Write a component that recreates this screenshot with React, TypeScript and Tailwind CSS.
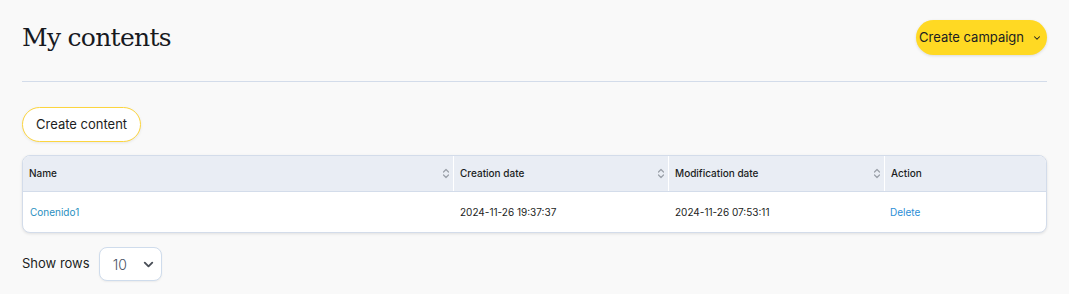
import { ChevronDown } from 'lucide-react';

const columns = [
  { label: 'Name', width: 'w-[430px]', sortable: true },
  { label: 'Creation date', width: 'w-[215px]', sortable: true },
  { label: 'Modification date', width: 'w-[216px]', sortable: true },
  { label: 'Action', width: 'flex-1', sortable: false },
];

const rows = [
  {
    name: 'Conenido1',
    created: '2024-11-26 19:37:37',
    modified: '2024-11-26 07:53:11',
  },
];

function SortIcon() {
  return (
    <svg width="8" height="11" viewBox="0 0 8 11" fill="none" className="text-[#9aa0a8]">
      <path d="M1.5 4 L4 1.5 L6.5 4" stroke="currentColor" strokeWidth="1.2" strokeLinecap="round" strokeLinejoin="round" />
      <path d="M1.5 7 L4 9.5 L6.5 7" stroke="currentColor" strokeWidth="1.2" strokeLinecap="round" strokeLinejoin="round" />
    </svg>
  );
}

export default function App() {
  return (
    <main className="min-h-[294px] bg-[#f9f9f9] px-[22px] pt-[20px] font-['Inter',sans-serif] text-[#1b1d22]">
      <header className="flex h-[35px] items-center justify-between">
        <h1 className="font-['DejaVu_Serif',serif] text-[25px] leading-none tracking-[-0.7px] text-[#17191f]">
          My contents
        </h1>
        <button className="flex h-[35px] items-center gap-[8px] rounded-full bg-[#ffd923] pl-[3px] pr-[5px] text-[13px] text-[#1b1d22] shadow-[0_1px_3px_rgba(0,0,0,0.12)]">
          Create campaign
          <ChevronDown className="h-[10px] w-[10px]" strokeWidth={2.5} />
        </button>
      </header>

      <hr className="mt-[26px] border-0 border-t border-[#d3dcea]" />

      <button className="mt-[25px] h-[35px] rounded-full border border-[#fcd53f] bg-white px-[13px] text-[13px] text-[#1b1d22] shadow-[0_1px_3px_rgba(0,0,0,0.08)]">
        Create content
      </button>

      <div className="mt-[13px] overflow-hidden rounded-[8px] border border-[#d3dcea] bg-white shadow-[0_1px_3px_rgba(0,0,0,0.1)]">
        <div className="flex h-[36px] border-b border-[#d3dcea] bg-[#e9edf4]">
          {columns.map((col, i) => (
            <div
              key={col.label}
              className={`${col.width} flex items-center justify-between pl-[6px] pr-[3px] text-[10px] font-medium ${i > 0 ? 'border-l border-white' : ''}`}
            >
              <span>{col.label}</span>
              {col.sortable && <SortIcon />}
            </div>
          ))}
        </div>
        {rows.map((row) => (
          <div key={row.name} className="flex h-[40px] items-center text-[10px]">
            <div className="w-[430px] pl-[7px] text-[#2a8fc0]">{row.name}</div>
            <div className="w-[215px] pl-[7px]">{row.created}</div>
            <div className="w-[216px] pl-[7px]">{row.modified}</div>
            <div className="flex-1 pl-[6px] text-[#2b8ed6]">Delete</div>
          </div>
        ))}
      </div>

      <div className="mt-[14px] flex items-center gap-[9px]">
        <span className="text-[13px]">Show rows</span>
        <div className="flex h-[34px] w-[63px] items-center justify-between rounded-[8px] border border-[#cfdcec] bg-white pl-[13px] pr-[5px] shadow-[0_1px_2px_rgba(0,0,0,0.06)]">
          <span className="text-[14px] font-light text-[#4a5365]">10</span>
          <ChevronDown className="h-[15px] w-[15px] text-[#4a4f58]" strokeWidth={3} />
        </div>
      </div>
    </main>
  );
}
